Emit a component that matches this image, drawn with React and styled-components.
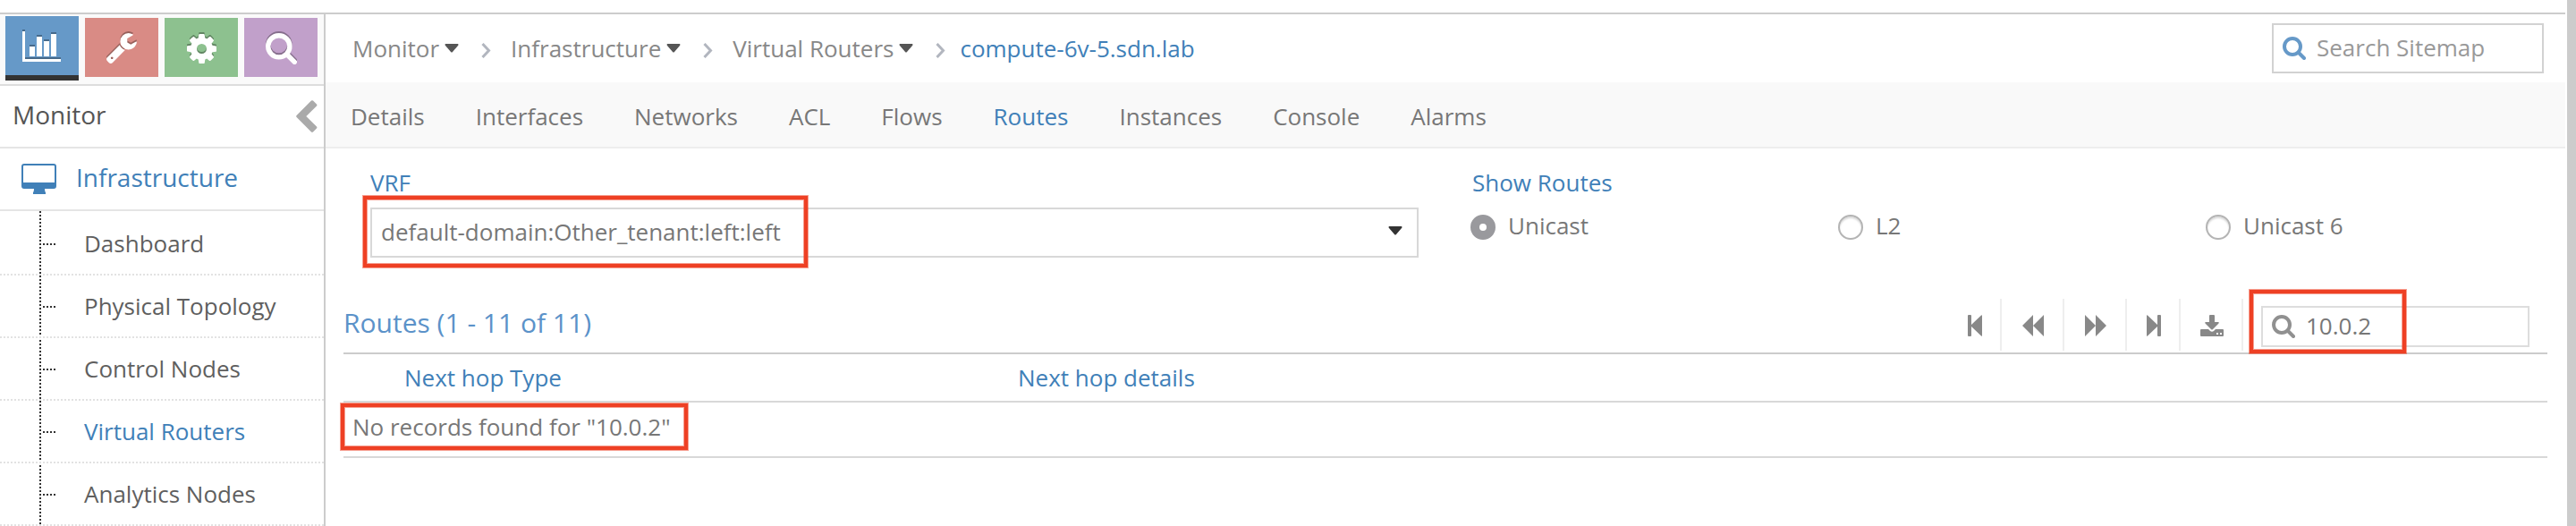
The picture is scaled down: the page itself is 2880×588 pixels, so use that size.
import React from "react";
import styled, { createGlobalStyle, css } from "styled-components";

const GlobalStyle = createGlobalStyle`
  * { box-sizing: border-box; }
  body { margin: 0; background: #fff; }
  body, button, input, select { font-family: "Open Sans", sans-serif; font-size: 26px; color: #777; }
  a { color: inherit; text-decoration: none; }
  ul, ol { list-style: none; margin: 0; padding: 0; }
  svg { display: block; flex: none; }
`;

const BLUE = "#4080b8";

/* ---------- page frame ---------- */
const Page = styled.div`
  display: flex;
  gap: 2px;
  min-height: 100vh;
`;
const Frame = styled.div`
  flex: 1;
  min-width: 0;
  margin-top: 14px;
  border-top: 2px solid #ccc;
  display: flex;
`;
const ScrollTrack = styled.div`
  flex: none;
  width: 10px;
  background: #ccc;
`;
const Sidebar = styled.aside`
  flex: none;
  width: 364px;
  border-right: 2px solid #ccc;
`;
const Main = styled.main`
  flex: 1;
  min-width: 0;
`;

/* ---------- sidebar ---------- */
const Shortcuts = styled.div`
  display: flex;
  gap: 7px;
  height: 80px;
  padding: 4px 6px;
  background: #fafafa;
  border-bottom: 2px solid #ddd;
`;
const Shortcut = styled.button`
  flex: none;
  display: flex;
  align-items: center;
  justify-content: center;
  width: 82px;
  height: 66px;
  padding: 2px 0 0;
  border: 0;
  background: ${(p) => p.$color};
  svg { filter: drop-shadow(0 -2px 0 rgba(0, 0, 0, 0.3)); }
  ${(p) => p.$active && css`
    height: 72px;
    margin-top: -2px;
    border-bottom: 6px solid #333;
  `}
`;
const MenuText = styled.span`
  padding-bottom: 4px;
  font-size: 28px;
`;
const MenuTitle = styled.div`
  display: flex;
  align-items: center;
  justify-content: space-between;
  height: 70px;
  padding: 0 7px 0 14px;
  border-bottom: 2px solid #e5e5e5;
  color: #555;
`;
const Collapse = styled.button`
  border: 0;
  padding: 0;
  background: none;
  color: #aaa;
`;
const MenuGroup = styled.a`
  display: flex;
  align-items: center;
  gap: 21px;
  height: 70px;
  padding: 0 24px;
  border-bottom: 2px solid #e5e5e5;
  && { color: ${BLUE}; }
`;
const dots = (dir) => `repeating-linear-gradient(${dir}, #333 0 2px, transparent 2px 4px)`;
const SubMenu = styled.ul`
  background: ${dots("180deg")} 44px 0 / 2px 100% no-repeat;
`;
const SubItem = styled.li`
  height: 70px;
  border-top: 2px solid transparent;
  line-height: 68px;
  background: ${dots("90deg")} 48px 34px / 14px 2px no-repeat;
  a {
    display: block;
    padding-left: 94px;
    color: ${(p) => (p.$active ? BLUE : "#5f5f5f")};
  }
  & + & { border-top: 2px dotted #e2e2e2; }
`;
const SubMenuEnd = styled.div`
  border-top: 2px dotted #e2e2e2;
`;

/* ---------- header ---------- */
const Header = styled.header`
  display: flex;
  align-items: center;
  justify-content: space-between;
  height: 76px;
  padding: 0 24px 0 30px;
`;
const Crumbs = styled.ol`
  display: flex;
  align-items: center;
  color: #888;
`;
const Crumb = styled.li`
  display: flex;
  align-items: center;
  margin-left: ${(p) => (p.$current ? -6 : 0)}px;
  a { color: ${(p) => (p.$current ? BLUE : "#888")}; }
`;
const CrumbLink = styled.a`
  display: flex;
  align-items: center;
  gap: 6px;
`;
const CrumbArrow = styled.svg`
  margin: 5px 22px 0 25px;
`;
const SearchBox = styled.label`
  display: flex;
  align-items: center;
  gap: 12px;
  width: ${(p) => p.$width}px;
  height: ${(p) => p.$height}px;
  padding: 0 10px;
  border: 2px solid ${(p) => p.$line};
  background: #fff;
  input {
    flex: 1;
    min-width: 0;
    width: 0;
    padding: 0 0 2px;
    border: 0;
    outline: 0;
    background: none;
  }
  input::placeholder { color: #999; opacity: 1; }
`;
const Tabs = styled.nav`
  display: flex;
  gap: 1px;
  height: 74px;
  padding-top: 2px;
  background: #f9f9f9;
  border-bottom: 2px solid #eee;
`;
const Tab = styled.a`
  padding: 0 28px;
  line-height: 72px;
  && { color: ${(p) => (p.$active ? BLUE : "#777")}; }
`;

/* ---------- filter form ---------- */
const Filters = styled.form`
  display: grid;
  grid-template-columns: minmax(0, 1172fr) minmax(0, 1224fr);
  column-gap: 58px;
  padding: 20px 0 0 50px;
`;
const FieldLabel = styled.label`
  display: block;
  line-height: 36px;
  color: ${BLUE};
`;
const SelectWrap = styled.div`
  position: relative;
  margin-top: 10px;
`;
const Select = styled.select`
  display: block;
  width: 100%;
  height: 56px;
  padding: 0 50px 3px 10px;
  border: 2px solid #d8d8d8;
  border-radius: 0;
  background: #fff;
  appearance: none;
`;
const SelectCaret = styled.svg`
  position: absolute;
  right: 18px;
  top: 21px;
  pointer-events: none;
`;
const RadioSet = styled.fieldset`
  margin: 0;
  padding: 0;
  border: 0;
  min-width: 0;
  legend { padding: 0 0 0 2px; line-height: 36px; color: ${BLUE}; }
`;
const RadioRow = styled.div`
  display: grid;
  grid-template-columns: 411fr 411fr 402fr;
  margin-top: 12px;
`;
const RadioLabel = styled.label`
  display: flex;
  align-items: center;
  gap: 14px;
  line-height: 36px;
`;
const Radio = styled.input`
  appearance: none;
  width: 28px;
  height: 28px;
  margin: 4px 0 0;
  border: 2px solid #b4b4b4;
  border-radius: 50%;
  background: #fff;
  box-shadow: inset 0 2px 2px rgba(0, 0, 0, 0.15);
  &:checked {
    border: 10px solid #99999d;
    box-shadow: none;
  }
`;

/* ---------- grid ---------- */
const Grid = styled.section`
  margin: 38px 20px 0;
`;
const GridBar = styled.div`
  display: flex;
  align-items: flex-start;
  height: 70px;
  border-bottom: 2px solid #ccc;
`;
const GridTitle = styled.h2`
  flex: 1;
  margin: 0;
  padding-top: 15px;
  font-size: 30px;
  font-weight: 400;
  line-height: 40px;
  color: #5b92c9;
`;
const Tools = styled.div`
  display: flex;
  margin: 8px 20px 0 0;
`;
const Tool = styled.button`
  display: flex;
  align-items: center;
  justify-content: center;
  width: ${(p) => (p.$narrow ? 60 : 70)}px;
  height: 58px;
  padding: 2px 0 0 2px;
  border: 0;
  border-right: 2px solid #eee;
  background: none;
  color: #888;
`;
const GridSearch = styled.div`
  position: relative;
  padding: 16px 20px 0 0;
`;
const Table = styled.table`
  width: 100%;
  table-layout: fixed;
  border-collapse: separate;
  border-spacing: 0;
  th, td {
    padding: 0;
    font-weight: 400;
    text-align: left;
    border-bottom: 2px solid #d8d8d8;
  }
  th { height: 54px; color: ${BLUE}; line-height: 52px; }
  td { height: 62px; padding: 0 10px 6px; }
  th:first-child { width: 68px; }
  th:nth-child(2) { width: 686px; }
`;

/* red annotation frame laid over the control it points at */
const Mark = styled.div`
  position: absolute;
  border: 4px solid #ee4024;
  box-shadow: 0 0 0 1px rgba(238, 64, 36, 0.5), inset 0 0 0 1px rgba(238, 64, 36, 0.5);
  pointer-events: none;
`;
const VrfMark = styled(Mark)`
  left: -8px;
  top: -13px;
  width: 497px;
  height: 80px;
`;
const SearchMark = styled(Mark)`
  left: -13px;
  top: -2px;
  width: 175px;
  height: 71px;
`;
const Message = styled.span`
  position: relative;
  display: inline-block;
  line-height: 36px;
`;
const MessageMark = styled(Mark)`
  left: -13px;
  top: -8px;
  right: -19px;
  height: 52px;
`;

/* ---------- icons ---------- */
const ChartIcon = () => (
  <svg width="44" height="34" viewBox="0 0 44 34" fill="#fff">
    <path d="M0 0h3v31h40v3H0zM8 17h6v11H8zM16 6h6v22h-6zM24 11h6v17h-6zM32 3h6v25h-6z" />
  </svg>
);
const WrenchIcon = () => (
  <svg width="34" height="36" viewBox="20 120 1650 1660" fill="#fff">
    <path d="M384 1472q0-26-19-45t-45-19-45 19-19 45 19 45 45 19 45-19 19-45zm644-420l-682 682q-37 37-90 37-52 0-91-37l-106-108q-38-36-38-90 0-53 38-91l681-681q39 98 114.500 173.500t173.500 114.500zm634-435q0 39-23 106-47 134-164.500 217.500t-258.500 83.500q-185 0-316.500-131.500t-131.500-316.500 131.500-316.500 316.500-131.500q58 0 121.500 16.500t107.500 46.500q16 11 16 28t-16 28l-293 169v224l193 107q5-3 79-48.500t135.500-81 70.500-35.500q15 0 23.500 10t8.500 25z" />
  </svg>
);
const GearIcon = () => (
  <svg width="33" height="33" viewBox="128 128 1536 1536" fill="#fff">
    <path d="M1152 896q0-106-75-181t-181-75-181 75-75 181 75 181 181 75 181-75 75-181zm512-109v222q0 12-8 23t-20 13l-185 28q-19 54-39 91 35 50 107 138 10 12 10 25t-9 23q-27 37-99 108t-94 71q-12 0-26-9l-138-108q-44 23-91 38-16 136-29 186-7 28-36 28h-222q-14 0-24.500-8.500t-11.500-21.500l-28-184q-49-16-90-37l-141 107q-10 9-25 9-14 0-25-11-126-114-165-168-7-10-7-23 0-12 8-23 15-21 51-66.500t54-70.500q-27-50-41-99l-183-27q-13-2-21-12.500t-8-23.500v-222q0-12 8-23t19-13l186-28q14-46 39-92-40-57-107-138-10-12-10-24 0-10 9-23 26-36 98.500-107.500t94.500-71.500q13 0 26 10l138 107q44-23 91-38 16-136 29-186 7-28 36-28h222q14 0 24.500 8.500t11.500 21.500l28 184q49 16 90 37l142-107q9-9 24-9 13 0 25 10 129 119 165 170 7 8 7 22 0 12-8 23-15 21-51 66.500t-54 70.500q26 50 41 98l183 28q13 2 21 12.500t8 23.500z" />
  </svg>
);
const SearchIcon = ({ size, color, strokeWidth = 4 }) => (
  <svg width={size} height={size} viewBox="0 0 26 26" fill="none" stroke={color} strokeWidth={strokeWidth} strokeLinecap="round">
    <circle cx="11" cy="11" r={11 - strokeWidth / 2} />
    <path d="M18 18l6 6" />
  </svg>
);
const DesktopIcon = () => (
  <svg width="40" height="34" viewBox="0 0 40 34" fill={BLUE}>
    <path fillRule="evenodd" d="M3 0h33a3 3 0 0 1 3 3v22a3 3 0 0 1-3 3H26q0 3 1 4v2H13v-2q1-1 1-4H3a3 3 0 0 1-3-3V3a3 3 0 0 1 3-3zM3 2a1 1 0 0 0-1 1v18h35V3a1 1 0 0 0-1-1z" />
  </svg>
);
const ChevronIcon = () => (
  <svg width="24" height="36" viewBox="0 0 24 36" fill="currentColor">
    <path d="M17 .6q1-.9 2 0l4 4q.9 1 0 2L11.300 18 23 29.500q.9 1 0 2l-4 4q-1 .9-2 0L.6 19q-.9-1 0-2z" />
  </svg>
);
const Caret = ({ as: Tag = "svg", fill = "#555" }) => (
  <Tag width="16" height="10" viewBox="0 0 16 10" fill={fill}>
    <path d="M1 0h14q1 1 0 2L9 9q-1 1-2 0L1 2Q0 1 1 0z" />
  </Tag>
);
const FirstIcon = () => (
  <svg width="16" height="24" viewBox="0 0 16 24" fill="currentColor">
    <path d="M1 0h2q1 0 1 1v10L15 .5q1-.9 1 .5v22q0 1.400-1 .5L4 13v10q0 1-1 1H1q-1 0-1-1V1q0-1 1-1z" />
  </svg>
);
const LastIcon = () => (
  <svg width="16" height="24" viewBox="0 0 16 24" fill="currentColor">
    <path d="M15 0h-2q-1 0-1 1v10L1 .5Q0-.4 0 1v22q0 1.400 1 .5L12 13v10q0 1 1 1h2q1 0 1-1V1q0-1-1-1z" />
  </svg>
);
const BackIcon = () => (
  <svg width="24" height="24" viewBox="0 0 24 24" fill="currentColor">
    <path d="M12 0v24L0 12zM24 0v24L12 12z" />
  </svg>
);
const ForwardIcon = () => (
  <svg width="24" height="24" viewBox="0 0 24 24" fill="currentColor">
    <path d="M0 0l12 12L0 24zM12 0l12 12-12 12z" />
  </svg>
);
const DownloadIcon = () => (
  <svg width="26" height="24" viewBox="0 0 26 24" fill="currentColor">
    <path d="M11 0h4q1 0 1 1v7h4q1.500 0 .5 1.500l-6.500 6.500q-1 1-2 0L5.500 9.500Q4.500 8 6 8h4V1q0-1 1-1z" />
    <path fillRule="evenodd" d="M1 16h8l2 2q2 1.500 4 0l2-2h8q1 0 1 1v6q0 1-1 1H1q-1 0-1-1v-6q0-1 1-1zM18 20v2h2v-2zM22 20v2h2v-2z" />
  </svg>
);

/* ---------- data ---------- */
const shortcuts = [
  { name: "Monitor", color: "#6699c8", icon: <ChartIcon />, active: true },
  { name: "Configure", color: "#d98b85", icon: <WrenchIcon /> },
  { name: "Settings", color: "#8dc18f", icon: <GearIcon /> },
  { name: "Query", color: "#c1a0ca", icon: <SearchIcon size={35} color="#fff" strokeWidth={4} /> },
];
const menu = ["Dashboard", "Physical Topology", "Control Nodes", "Virtual Routers", "Analytics Nodes"];
const crumbs = ["Monitor", "Infrastructure", "Virtual Routers", "compute-6v-5.sdn.lab"];
const tabs = ["Details", "Interfaces", "Networks", "ACL", "Flows", "Routes", "Instances", "Console", "Alarms"];
const families = ["Unicast", "L2", "Unicast 6"];
const tools = [
  { name: "First page", icon: <FirstIcon />, narrow: true },
  { name: "Previous page", icon: <BackIcon /> },
  { name: "Next page", icon: <ForwardIcon /> },
  { name: "Last page", icon: <LastIcon />, narrow: true },
  { name: "Export", icon: <DownloadIcon /> },
];

export default function App() {
  return (
    <Page>
      <GlobalStyle />
      <Frame>
        <Sidebar>
          <Shortcuts>
            {shortcuts.map((s) => (
              <Shortcut key={s.name} type="button" aria-label={s.name} $color={s.color} $active={s.active}>
                {s.icon}
              </Shortcut>
            ))}
          </Shortcuts>
          <MenuTitle>
            <MenuText>Monitor</MenuText>
            <Collapse type="button" aria-label="Collapse menu"><ChevronIcon /></Collapse>
          </MenuTitle>
          <MenuGroup href="#infrastructure">
            <DesktopIcon />
            <MenuText>Infrastructure</MenuText>
          </MenuGroup>
          <SubMenu>
            {menu.map((m) => (
              <SubItem key={m} $active={m === "Virtual Routers"}><a href="#menu">{m}</a></SubItem>
            ))}
          </SubMenu>
          <SubMenuEnd />
        </Sidebar>
        <Main>
          <Header>
            <Crumbs>
              {crumbs.map((c, i) => {
                const current = i === crumbs.length - 1;
                return (
                  <Crumb key={c} $current={current}>
                    <CrumbLink href="#crumb">{c}{!current && <Caret />}</CrumbLink>
                    {!current && (
                      <CrumbArrow width="11" height="17" viewBox="0 0 11 17" fill="none" stroke="#b2b6bf" strokeWidth="3">
                        <path d="M1.500 1l7 7.500-7 7.500" />
                      </CrumbArrow>
                    )}
                  </Crumb>
                );
              })}
            </Crumbs>
            <SearchBox $width={304} $height={56} $line="#d2d2d2">
              <SearchIcon size={26} color="#6699c8" />
              <input type="text" placeholder="Search Sitemap" aria-label="Search Sitemap" />
            </SearchBox>
          </Header>
          <Tabs>
            {tabs.map((t) => <Tab key={t} href="#tab" $active={t === "Routes"}>{t}</Tab>)}
          </Tabs>
          <Filters>
            <div>
              <FieldLabel htmlFor="vrf">VRF</FieldLabel>
              <SelectWrap>
                <Select id="vrf">
                  <option>default-domain:Other_tenant:left:left</option>
                </Select>
                <Caret as={SelectCaret} fill="#333" />
                <VrfMark />
              </SelectWrap>
            </div>
            <RadioSet>
              <legend>Show Routes</legend>
              <RadioRow>
                {families.map((f, i) => (
                  <RadioLabel key={f}>
                    <Radio type="radio" name="family" defaultChecked={i === 0} />
                    {f}
                  </RadioLabel>
                ))}
              </RadioRow>
            </RadioSet>
          </Filters>
          <Grid>
            <GridBar>
              <GridTitle>Routes (1 - 11 of 11)</GridTitle>
              <Tools>
                {tools.map((t) => (
                  <Tool key={t.name} type="button" aria-label={t.name} $narrow={t.narrow}>{t.icon}</Tool>
                ))}
              </Tools>
              <GridSearch>
                <SearchBox $width={300} $height={46} $line="#ddd">
                  <SearchIcon size={26} color="#909090" />
                  <input type="text" defaultValue="10.0.2" aria-label="Search routes" />
                </SearchBox>
                <SearchMark />
              </GridSearch>
            </GridBar>
            <Table>
              <thead>
                <tr><th aria-label="Expand" /><th>Next hop Type</th><th>Next hop details</th></tr>
              </thead>
              <tbody>
                <tr>
                  <td colSpan={3}>
                    <Message>No records found for "10.0.2"<MessageMark /></Message>
                  </td>
                </tr>
              </tbody>
            </Table>
          </Grid>
        </Main>
      </Frame>
      <ScrollTrack />
    </Page>
  );
}
